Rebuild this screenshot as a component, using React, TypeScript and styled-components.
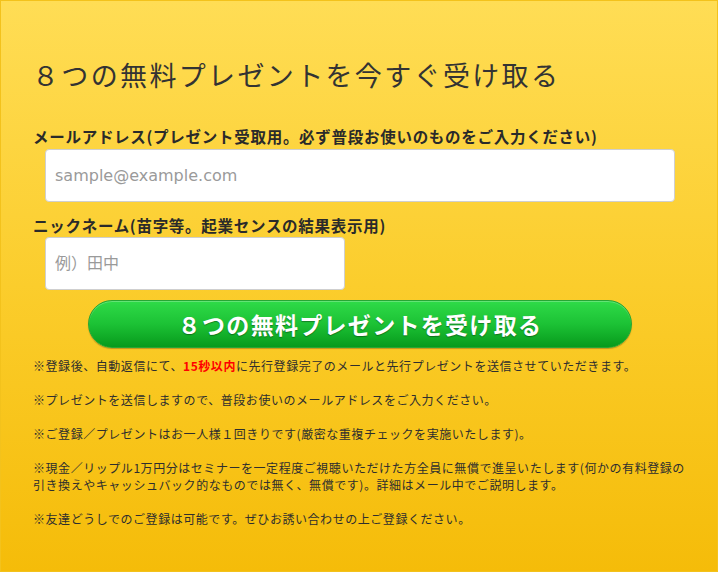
import React from "react";
import styled, { createGlobalStyle } from "styled-components";

const GlobalStyle = createGlobalStyle`
  html, body { margin: 0; padding: 0; background: #ffffff; }
  body { font-family: "Noto Sans CJK JP", "Noto Sans", sans-serif; color: #333; }
  * { box-sizing: border-box; }
`;

const Panel = styled.section`
  width: 718px;
  height: 572px;
  border: 1px solid #f3c21c;
  background: linear-gradient(to bottom, #ffdd55 0%, #fbcd2c 50%, #f5bc09 100%);
  padding: 54px 30px 0 32px;
  display: flex;
  flex-direction: column;
`;

const Title = styled.h1`
  margin: 0 0 0 -1px;
  font-size: 27px;
  line-height: 40px;
  font-weight: 400;
  letter-spacing: 2.35px;
  color: #333;
`;

const Label = styled.label<{ $top: number }>`
  display: block;
  margin-top: ${(p) => p.$top}px;
  font-size: 15.5px;
  line-height: 20px;
  font-weight: 700;
  color: #2a2a2a;
  letter-spacing: 0.72px;
`;

const Input = styled.input<{ $width: number }>`
  display: block;
  margin: ${(p) => (p.$width > 400 ? 3 : 2)}px 0 0 12px;
  width: ${(p) => p.$width}px;
  height: 53px;
  border: 1px solid #cfcfcf;
  border-radius: 4px;
  background: #fff;
  padding: 0 9px;
  font-family: "DejaVu Sans", "Noto Sans CJK JP", sans-serif;
  font-size: 16px;
  color: #333;
  outline: none;
  &::placeholder { color: #9a9a9a; }
`;

const SubmitButton = styled.button`
  align-self: center;
  margin: 10px 0 0 0;
  width: 544px;
  height: 48px;
  border-radius: 24px;
  border: 1px solid #27a634;
  background: linear-gradient(to bottom, #2fdb48 0%, #1cc235 50%, #079a1c 100%);
  box-shadow: 0 1px 1px rgba(0, 0, 0, 0.25), inset 0 1px 0 rgba(255, 255, 255, 0.25);
  color: #fff;
  font-family: "Noto Sans CJK JP", sans-serif;
  font-size: 23px;
  font-weight: 700;
  letter-spacing: 1.3px;
  text-shadow: 0 1px 1px rgba(0, 0, 0, 0.35);
  cursor: pointer;
`;

const Notes = styled.div`
  margin-top: 9px;
  display: flex;
  flex-direction: column;
  gap: 17px;
`;

const Note = styled.p`
  margin: 0;
  font-size: 12px;
  line-height: 17px;
  letter-spacing: 0.55px;
  color: #2e2e2e;
`;

const Highlight = styled.strong`
  color: #ff0000;
  font-weight: 700;
`;

export default function App() {
  return (
    <>
      <GlobalStyle />
      <Panel>
        <Title>８つの無料プレゼントを今すぐ受け取る</Title>
        <Label $top={31}>メールアドレス(プレゼント受取用。必ず普段お使いのものをご入力ください)</Label>
        <Input $width={630} type="email" placeholder="sample@example.com" />
        <Label $top={13}>ニックネーム(苗字等。起業センスの結果表示用)</Label>
        <Input $width={300} type="text" placeholder="例）田中" />
        <SubmitButton type="button">８つの無料プレゼントを受け取る</SubmitButton>
        <Notes>
          <Note>
            ※登録後、自動返信にて、<Highlight>15秒以内</Highlight>に先行登録完了のメールと先行プレゼントを送信させていただきます。
          </Note>
          <Note>※プレゼントを送信しますので、普段お使いのメールアドレスをご入力ください。</Note>
          <Note>※ご登録／プレゼントはお一人様１回きりです(厳密な重複チェックを実施いたします)。</Note>
          <Note>
            ※現金／リップル1万円分はセミナーを一定程度ご視聴いただけた方全員に無償で進呈いたします(何かの有料登録の
            <br />
            引き換えやキャッシュバック的なものでは無く、無償です)。詳細はメール中でご説明します。
          </Note>
          <Note>※友達どうしでのご登録は可能です。ぜひお誘い合わせの上ご登録ください。</Note>
        </Notes>
      </Panel>
    </>
  );
}
